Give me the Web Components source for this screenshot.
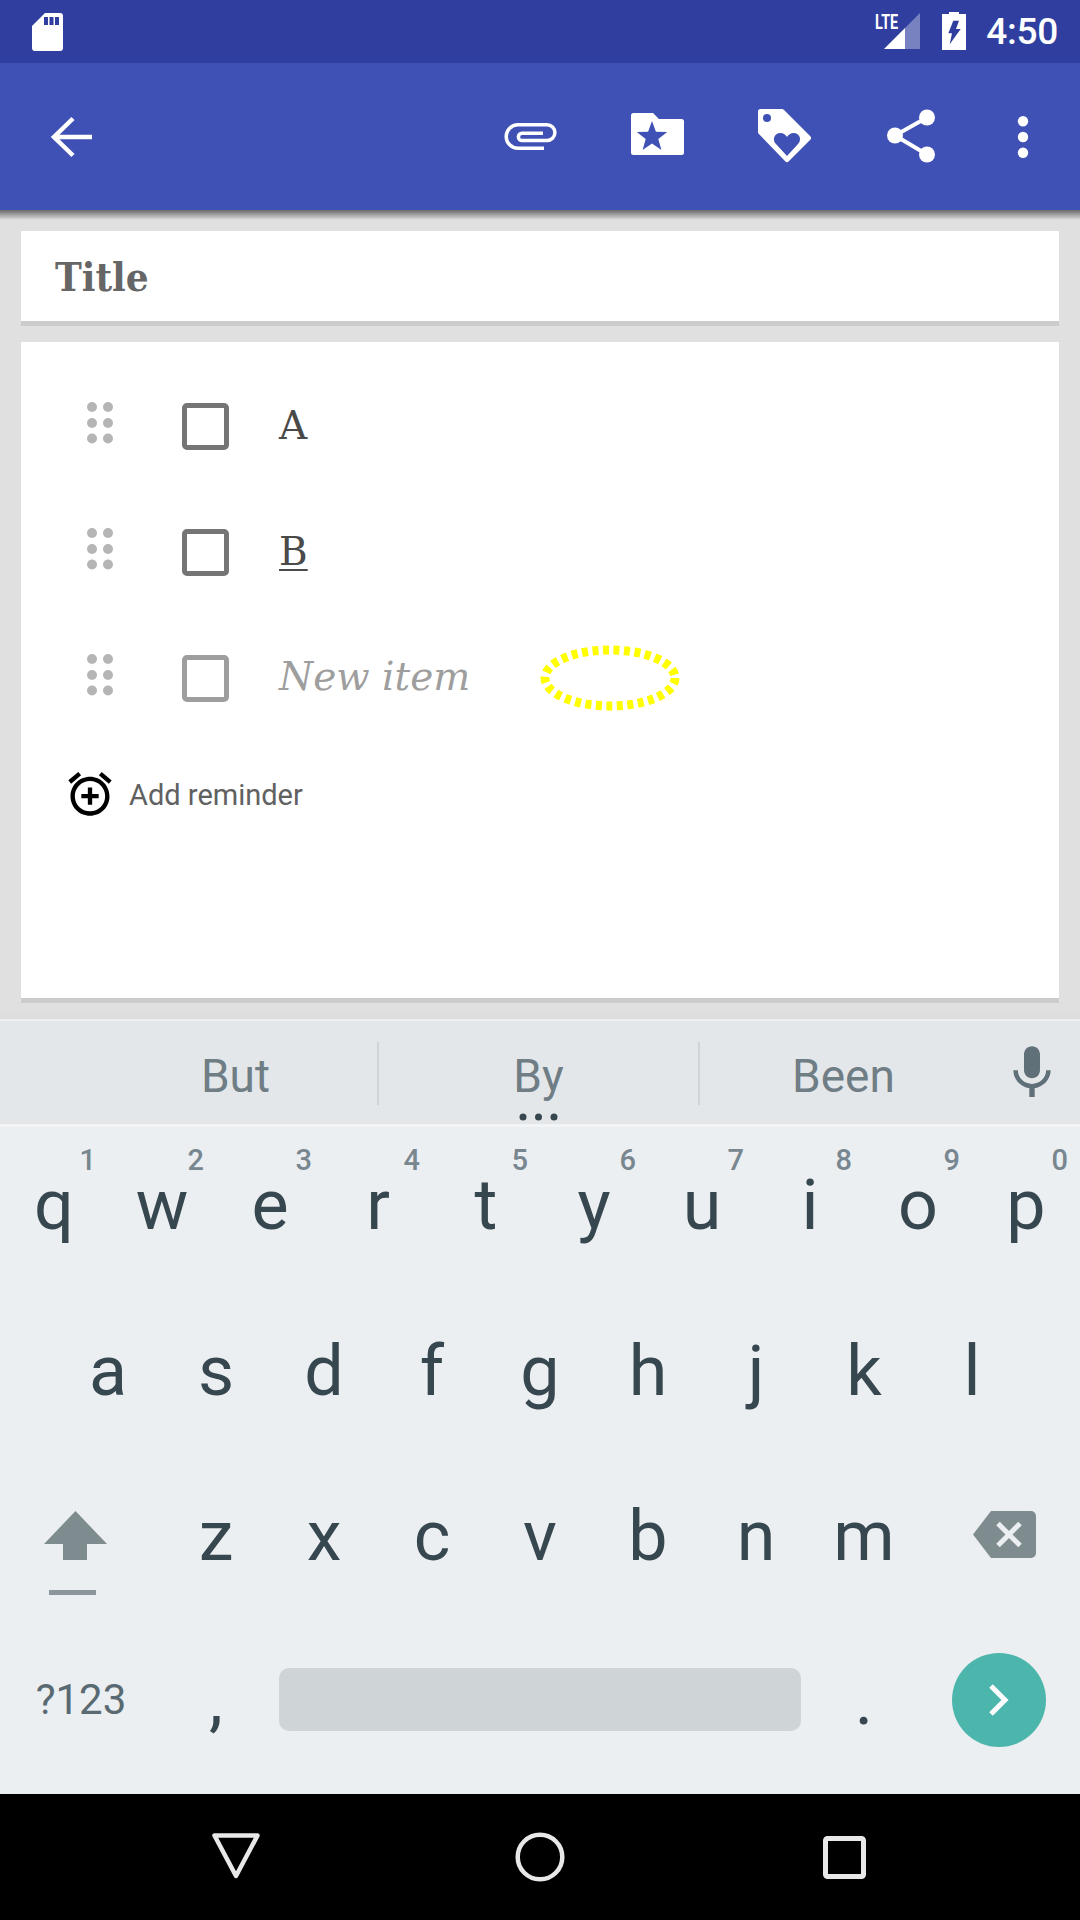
<!DOCTYPE html>
<html>
<head>
<meta charset="utf-8">
<title>Note</title>
<style>
  html, body { margin: 0; padding: 0; background: #e0e0e0; }
  body { width: 1080px; height: 1920px; overflow: hidden; font-family: Roboto, sans-serif; }
</style>
</head>
<body>
<note-app>
  <status-bar></status-bar>
  <app-toolbar></app-toolbar>
  <note-content>
    <title-card>Title</title-card>
    <note-card>
      <check-item>A</check-item>
      <check-item underline>B</check-item>
      <check-item placeholder>New item</check-item>
      <reminder-row>Add reminder</reminder-row>
    </note-card>
  </note-content>
  <soft-keyboard>
    <suggestion-strip></suggestion-strip>
    <kb-row style="--pt:36px">
      <kb-key hint="1">q</kb-key><kb-key hint="2">w</kb-key><kb-key hint="3">e</kb-key><kb-key hint="4">r</kb-key><kb-key hint="5">t</kb-key><kb-key hint="6">y</kb-key><kb-key hint="7">u</kb-key><kb-key hint="8">i</kb-key><kb-key hint="9">o</kb-key><kb-key hint="0">p</kb-key>
    </kb-row>
    <kb-row style="--pt:35px;padding:0 54px">
      <kb-key>a</kb-key><kb-key>s</kb-key><kb-key>d</kb-key><kb-key>f</kb-key><kb-key>g</kb-key><kb-key>h</kb-key><kb-key>j</kb-key><kb-key>k</kb-key><kb-key>l</kb-key>
    </kb-row>
    <kb-row style="--pt:33px">
      <kb-icon kind="shift"></kb-icon>
      <kb-key>z</kb-key><kb-key>x</kb-key><kb-key>c</kb-key><kb-key>v</kb-key><kb-key>b</kb-key><kb-key>n</kb-key><kb-key>m</kb-key>
      <kb-icon kind="back"></kb-icon>
    </kb-row>
    <kb-bottom-row></kb-bottom-row>
  </soft-keyboard>
  <nav-bar></nav-bar>
</note-app>

<script>
// root column
const appTemplate = document.createElement('template')
appTemplate.innerHTML = `
<style>
 :host{ display:flex; flex-direction:column; width:1080px; height:1920px; }
</style>
<slot></slot>
`
class NoteApp extends HTMLElement {
  constructor() {
    super();
    this.attachShadow({ mode: 'open' });
    this.shadowRoot.appendChild(appTemplate.content.cloneNode(true));
  }
}

// status bar
const statusTemplate = document.createElement('template')
statusTemplate.innerHTML = `
<style>
 :host{ display:flex; align-items:center; height:63px; background:#303f9f; padding:0 22px 0 32px; flex:none; box-sizing:border-box; }
 .sd{ display:block; }
 .right{ margin-left:auto; display:flex; align-items:center; }
 .signal{ position:relative; width:45px; height:36px; margin-top:-1px; }
 .signal svg{ display:block; }
 .lte{ position:absolute; left:0; top:-1px; font:700 20px/20px Roboto, sans-serif; color:#fff; transform:scaleX(.72); transform-origin:0 50%; }
 .batt{ display:block; margin-left:22px; margin-top:-1px; }
 .time{ margin-left:20px; font:500 37px/44px Roboto, sans-serif; color:#fff; letter-spacing:-.3px; }
</style>
<svg class="sd" width="31" height="38" viewBox="0 0 31 38">
  <path fill="#fff" d="M13 0H28a3 3 0 0 1 3 3V35a3 3 0 0 1-3 3H3a3 3 0 0 1-3-3V13z"/>
  <path fill="#303f9f" d="M12 4h4v8h-4zM17.500 4h4v8h-4zM23 4h4v8h-4z"/>
</svg>
<div class="right">
  <div class="signal">
    <svg width="45" height="36" viewBox="0 0 45 36">
      <path fill="#fff" d="M9 36L30 15V36z"/>
      <path fill="#fff" opacity=".35" d="M30 15L45 0V36H30z"/>
    </svg>
    <span class="lte">LTE</span>
  </div>
  <svg class="batt" width="24" height="38" viewBox="0 0 24 38">
    <path fill="#fff" d="M7 0h10v2h7v36H0V2h7z"/>
    <path fill="#303f9f" d="M11.300 8.700H17L14 17H18.700L7.700 32.300L10 21.300H6.300z"/>
  </svg>
  <span class="time">4:50</span>
</div>
`
class StatusBar extends HTMLElement {
  constructor() {
    super();
    this.attachShadow({ mode: 'open' });
    this.shadowRoot.appendChild(statusTemplate.content.cloneNode(true));
  }
}

// toolbar
const toolbarTemplate = document.createElement('template')
toolbarTemplate.innerHTML = `
<style>
 :host{ display:flex; align-items:center; height:147px; background:#3f51b5; flex:none; position:relative; padding-right:9px; box-sizing:border-box; z-index:1; }
 :host::after{ content:""; position:absolute; left:0; right:0; top:100%; height:10px; background:linear-gradient(#6a6a6a, #e0e0e0); }
 .btn{ display:flex; align-items:center; justify-content:center; width:127px; height:100%; }
 .back{ width:142px; }
 .more{ width:96px; }
 .spacer{ flex:1; }
 svg{ display:block; }
</style>
<div class="btn back">
  <svg width="48" height="48" viewBox="0 0 48 48"><path fill="none" stroke="#fff" stroke-width="4.500" d="M45 24H6M26 5.500L7 24L26 42.500"/></svg>
</div>
<div class="spacer"></div>
<div class="btn">
  <svg width="60" height="34" viewBox="6 20 60 34"><path fill="none" stroke="#fff" stroke-width="3.500" d="M49 48.300H23A11.800 11.800 0 0 1 23 24.700H52A7.900 7.900 0 0 1 52 40.500H27A3.600 3.600 0 0 1 27 33.300H48"/></svg>
</div>
<div class="btn">
  <svg width="60" height="51" viewBox="133 12 60 51">
    <path fill="#fff" d="M138.500 14H158L164 20H186.500a2.500 2.500 0 0 1 2.500 2.500V53.500a2.500 2.500 0 0 1-2.500 2.500H138.500a2.500 2.500 0 0 1-2.500-2.500V16.500a2.500 2.500 0 0 1 2.500-2.500z"/>
    <path fill="#3f51b5" d="M157 22L160.900 32.700L172.200 33.100L163.300 40L166.400 50.900L157 44.600L147.600 50.900L150.700 40L141.800 33.100L153.100 32.700z"/>
  </svg>
</div>
<div class="btn">
  <svg width="60" height="61" viewBox="10 6 60 61">
    <path fill="#fff" stroke="#fff" stroke-width="5" stroke-linejoin="round" d="M15.500 11.500H37L63.500 38L42 59.500L15.500 32z"/>
    <circle cx="22" cy="18" r="4" fill="#3f51b5"/>
    <path fill="#3f51b5" d="M42 56L31 44C27 40 29 33 35.500 33C38 33 41 35 42 37C43 35 46 33 48.500 33C55 33 57 40 53 44z"/>
  </svg>
</div>
<div class="btn">
  <svg width="60" height="60" viewBox="-30 -30 60 60">
    <path fill="none" stroke="#fff" stroke-width="4" d="M15 -19.500L-17 -1.500L15 17.500"/>
    <circle cx="15" cy="-19.500" r="8" fill="#fff"/>
    <circle cx="-17" cy="-1.500" r="8" fill="#fff"/>
    <circle cx="15" cy="17.500" r="8" fill="#fff"/>
  </svg>
</div>
<div class="btn more">
  <svg width="12" height="44" viewBox="0 0 12 44">
    <circle cx="6" cy="6.300" r="5.200" fill="#fff"/>
    <circle cx="6" cy="22" r="5.200" fill="#fff"/>
    <circle cx="6" cy="37.700" r="5.200" fill="#fff"/>
  </svg>
</div>
`
class AppToolbar extends HTMLElement {
  constructor() {
    super();
    this.attachShadow({ mode: 'open' });
    this.shadowRoot.appendChild(toolbarTemplate.content.cloneNode(true));
  }
}

// grey area with the two cards
const contentTemplate = document.createElement('template')
contentTemplate.innerHTML = `
<style>
 :host{ display:flex; flex-direction:column; gap:16px; flex:1; min-height:0; padding:21px 21px 16px; box-sizing:border-box; background:linear-gradient(#e0e0e0 calc(100% - 10px), #dcdcdc); }
</style>
<slot></slot>
`
class NoteContent extends HTMLElement {
  constructor() {
    super();
    this.attachShadow({ mode: 'open' });
    this.shadowRoot.appendChild(contentTemplate.content.cloneNode(true));
  }
}

const titleTemplate = document.createElement('template')
titleTemplate.innerHTML = `
<style>
 :host{ display:flex; align-items:center; height:95px; box-sizing:border-box; flex:none; background:#fff; border-bottom:5px solid #ccc; padding:2px 0 0 34px; font:700 40px/46px "DejaVu Serif Condensed", "DejaVu Serif", serif; color:#666; }
</style>
<slot></slot>
`
class TitleCard extends HTMLElement {
  constructor() {
    super();
    this.attachShadow({ mode: 'open' });
    this.shadowRoot.appendChild(titleTemplate.content.cloneNode(true));
  }
}

const cardTemplate = document.createElement('template')
cardTemplate.innerHTML = `
<style>
 :host{ display:block; flex:1; min-height:0; box-sizing:border-box; background:#fff; border-bottom:5px solid #ccc; padding-top:21px; }
</style>
<slot></slot>
`
class NoteCard extends HTMLElement {
  constructor() {
    super();
    this.attachShadow({ mode: 'open' });
    this.shadowRoot.appendChild(cardTemplate.content.cloneNode(true));
  }
}

// one checklist row, drag handle + box + text
const itemTemplate = document.createElement('template')
itemTemplate.innerHTML = `
<style>
 :host{ display:flex; align-items:center; height:126px; font:400 39px/46px "DejaVu Serif", serif; color:#4a4a4a; }
 .handle{ display:block; margin-left:63px; margin-top:-6px; flex:none; }
 .box{ flex:none; width:47px; height:47px; box-sizing:border-box; margin-left:66px; border:5px solid #757575; border-radius:5px; }
 .text{ margin-left:50px; }
 :host([underline]) .text{ text-decoration:underline; text-decoration-thickness:2px; text-underline-offset:4px; }
 :host([placeholder]) .box{ border-color:#9e9e9e; }
 :host([placeholder]) .text{ color:#9e9e9e; font-style:italic; margin-top:-2px; }
 .oval{ display:none; flex:none; margin-left:69px; }
 :host([placeholder]) .oval{ display:block; }
</style>
<svg class="handle" width="32" height="42" viewBox="0 0 32 42" fill="#b5b5b5">
  <circle cx="8" cy="5" r="5"/><circle cx="24" cy="5" r="5"/>
  <circle cx="8" cy="21" r="5"/><circle cx="24" cy="21" r="5"/>
  <circle cx="8" cy="36.500" r="5"/><circle cx="24" cy="36.500" r="5"/>
</svg>
<div class="box"></div>
<span class="text"><slot></slot></span>
<svg class="oval" width="142" height="68" viewBox="0 0 142 68">
  <ellipse cx="71" cy="34" rx="65" ry="28" fill="none" stroke="#ffff00" stroke-width="9" stroke-dasharray="6 4.500"/>
</svg>
`
class CheckItem extends HTMLElement {
  constructor() {
    super();
    this.attachShadow({ mode: 'open' });
    this.shadowRoot.appendChild(itemTemplate.content.cloneNode(true));
  }
}

const reminderTemplate = document.createElement('template')
reminderTemplate.innerHTML = `
<style>
 :host{ display:flex; align-items:center; height:52px; margin-top:27px; padding-left:43px; font:400 29px/34px Roboto, sans-serif; color:#616161; }
 svg{ display:block; flex:none; }
 span{ margin:2px 0 0 13px; }
</style>
<svg width="52" height="52" viewBox="0 0 24 24"><path fill="#000" d="M7.880 3.390L6.600 1.860 2 5.710l1.290 1.530 4.590-3.850zM22 5.720l-4.600-3.860-1.290 1.530 4.600 3.860L22 5.720zM12 4c-4.970 0-9 4.030-9 9s4.020 9 9 9c4.970 0 9-4.030 9-9s-4.030-9-9-9zm0 16c-3.870 0-7-3.130-7-7s3.130-7 7-7 7 3.130 7 7-3.130 7-7 7zm1-11h-2v3H8v2h3v3h2v-3h3v-2h-3V9z"/></svg>
<span><slot></slot></span>
`
class ReminderRow extends HTMLElement {
  constructor() {
    super();
    this.attachShadow({ mode: 'open' });
    this.shadowRoot.appendChild(reminderTemplate.content.cloneNode(true));
  }
}

// keyboard
const keyboardTemplate = document.createElement('template')
keyboardTemplate.innerHTML = `
<style>
 :host{ display:grid; grid-template-rows:108px repeat(4, 1fr); height:775px; flex:none; background:#eceff1; }
</style>
<slot></slot>
`
class SoftKeyboard extends HTMLElement {
  constructor() {
    super();
    this.attachShadow({ mode: 'open' });
    this.shadowRoot.appendChild(keyboardTemplate.content.cloneNode(true));
  }
}

const stripTemplate = document.createElement('template')
stripTemplate.innerHTML = `
<style>
 :host{ display:grid; grid-template-columns:94px 285px 321px 287px 93px; height:108px; box-sizing:border-box; background:#e4e7ea; border-top:2px solid #eef0f2; border-bottom:3px solid #f2f4f5; position:relative; font:400 46px/54px Roboto, sans-serif; color:#6f7d85; }
 .cell{ display:flex; align-items:center; justify-content:center; height:63px; margin-top:21px; padding-top:4px; box-sizing:border-box; }
 .line{ border-right:2px solid #cfd4d7; }
 .mic{ display:flex; align-items:center; justify-content:center; height:103px; margin-left:-4px; }
 svg{ display:block; }
 .dots{ position:absolute; left:519px; top:92px; }
</style>
<div></div>
<div class="cell line">But</div>
<div class="cell line">By</div>
<div class="cell">Been</div>
<div class="mic"><svg width="64" height="64" viewBox="0 0 24 24"><path fill="#5f7079" d="M12 14c1.660 0 2.990-1.340 2.990-3L15 5c0-1.660-1.340-3-3-3S9 3.340 9 5v6c0 1.660 1.340 3 3 3zm5.300-3c0 3-2.540 5.100-5.300 5.100S6.700 14 6.700 11H5c0 3.410 2.720 6.230 6 6.720V21h2v-3.280c3.280-.480 6-3.300 6-6.720h-1.700z"/></svg></div>
<svg class="dots" width="40" height="8" viewBox="0 0 40 8" fill="#37474f"><circle cx="4" cy="4" r="3.500"/><circle cx="19.500" cy="4" r="3.500"/><circle cx="35" cy="4" r="3.500"/></svg>
`
class SuggestionStrip extends HTMLElement {
  constructor() {
    super();
    this.attachShadow({ mode: 'open' });
    this.shadowRoot.appendChild(stripTemplate.content.cloneNode(true));
  }
}

const rowTemplate = document.createElement('template')
rowTemplate.innerHTML = `
<style>
 :host{ display:flex; min-height:0; }
</style>
<slot></slot>
`
class KbRow extends HTMLElement {
  constructor() {
    super();
    this.attachShadow({ mode: 'open' });
    this.shadowRoot.appendChild(rowTemplate.content.cloneNode(true));
  }
}

const keyTemplate = document.createElement('template')
keyTemplate.innerHTML = `
<style>
 :host{ display:block; width:108px; flex:none; position:relative; box-sizing:border-box; padding-top:var(--pt, 36px); text-align:center; font:400 70px/84px Roboto, sans-serif; color:#37474f; }
 .hint{ position:absolute; right:12px; top:18px; font:500 29px/30px Roboto, sans-serif; color:#78868f; }
</style>
<slot></slot>
<span class="hint"></span>
`
class KbKey extends HTMLElement {
  constructor() {
    super();
    this.attachShadow({ mode: 'open' });
    this.shadowRoot.appendChild(keyTemplate.content.cloneNode(true));
    this.shadowRoot.querySelector('.hint').textContent = this.getAttribute('hint') || '';
  }
}

const iconKeyTemplate = document.createElement('template')
iconKeyTemplate.innerHTML = `
<style>
 :host{ display:block; width:162px; flex:none; box-sizing:border-box; }
 svg{ display:block; }
</style>
<div class="wrap"></div>
`
const kbIcons = {
  shift: `<svg style="margin:50px 0 0 44px" width="63" height="85" viewBox="0 0 63 85"><path fill="#7f8c8f" d="M31.500 0L63 33H43V49H19V33H0z"/><path fill="#8a969b" d="M5 79H52V84H5z"/></svg>`,
  back: `<svg style="margin:50px 0 0 55px" width="63" height="47" viewBox="0 0 63 47"><path fill="#7f8c8f" d="M18 0H58a5 5 0 0 1 5 5V42a5 5 0 0 1-5 5H18L0 23.500z"/><path fill="none" stroke="#eceff1" stroke-width="5" d="M25 12.500L47 34.500M47 12.500L25 34.500"/></svg>`
}
class KbIcon extends HTMLElement {
  constructor() {
    super();
    this.attachShadow({ mode: 'open' });
    this.shadowRoot.appendChild(iconKeyTemplate.content.cloneNode(true));
    this.shadowRoot.querySelector('.wrap').innerHTML = kbIcons[this.getAttribute('kind')];
  }
}

const bottomTemplate = document.createElement('template')
bottomTemplate.innerHTML = `
<style>
 :host{ display:grid; grid-template-columns:162px 108px 540px 108px 162px; min-height:0; color:#37474f; }
 .sym{ padding-top:48px; text-align:center; font:400 42px/50px Roboto, sans-serif; color:#5a6a72; }
 .punct{ padding-top:31px; text-align:center; font:400 70px/84px Roboto, sans-serif; }
 .space{ padding:41px 9px 0; }
 .bar{ height:63px; border-radius:10px; background:#cfd4d7; }
 .go{ padding-top:26px; display:flex; justify-content:center; }
 .circle{ width:94px; height:94px; border-radius:50%; background:#4db6ac; display:flex; align-items:center; justify-content:center; }
 svg{ display:block; }
</style>
<div class="sym">?123</div>
<div class="punct">,</div>
<div class="space"><div class="bar"></div></div>
<div class="punct">.</div>
<div class="go"><div class="circle"><svg width="24" height="34" viewBox="0 0 24 34"><path fill="none" stroke="#fff" stroke-width="5" d="M4 3L18 17L4 31"/></svg></div></div>
`
class KbBottomRow extends HTMLElement {
  constructor() {
    super();
    this.attachShadow({ mode: 'open' });
    this.shadowRoot.appendChild(bottomTemplate.content.cloneNode(true));
  }
}

// android nav bar
const navTemplate = document.createElement('template')
navTemplate.innerHTML = `
<style>
 :host{ display:flex; align-items:center; justify-content:center; gap:244px; height:126px; background:#000; flex:none; }
 svg{ display:block; }
</style>
<svg width="60" height="60" viewBox="0 0 60 60"><path fill="none" stroke="#e8e8e8" stroke-width="4.500" stroke-linejoin="round" d="M8.500 8.500H51.500L30 49z"/></svg>
<svg width="60" height="60" viewBox="0 0 60 60"><circle cx="30" cy="30" r="22.300" fill="none" stroke="#e8e8e8" stroke-width="4.500"/></svg>
<svg width="60" height="60" viewBox="0 0 60 60"><rect x="11.500" y="11.500" width="38" height="38" rx="2" fill="none" stroke="#e8e8e8" stroke-width="5"/></svg>
`
class NavBar extends HTMLElement {
  constructor() {
    super();
    this.attachShadow({ mode: 'open' });
    this.shadowRoot.appendChild(navTemplate.content.cloneNode(true));
  }
}

window.customElements.define('note-app', NoteApp)
window.customElements.define('status-bar', StatusBar)
window.customElements.define('app-toolbar', AppToolbar)
window.customElements.define('note-content', NoteContent)
window.customElements.define('title-card', TitleCard)
window.customElements.define('note-card', NoteCard)
window.customElements.define('check-item', CheckItem)
window.customElements.define('reminder-row', ReminderRow)
window.customElements.define('soft-keyboard', SoftKeyboard)
window.customElements.define('suggestion-strip', SuggestionStrip)
window.customElements.define('kb-row', KbRow)
window.customElements.define('kb-key', KbKey)
window.customElements.define('kb-icon', KbIcon)
window.customElements.define('kb-bottom-row', KbBottomRow)
window.customElements.define('nav-bar', NavBar)
</script>
</body>
</html>
